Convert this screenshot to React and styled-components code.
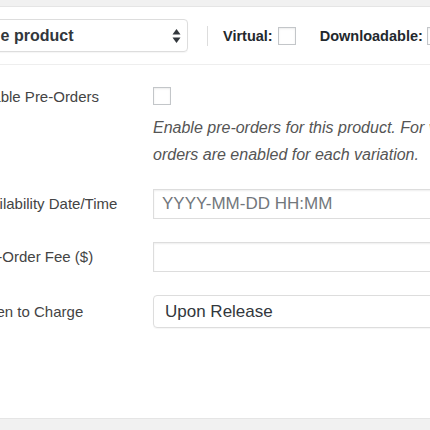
import React from 'react'
import styled, { createGlobalStyle } from 'styled-components'

const GlobalStyle = createGlobalStyle`
  body{
    margin: 0;
    background: #f1f1f1;
    font-family: "Liberation Sans", Arial, sans-serif;
    overflow: hidden;
  }
`;

const Page = styled.div`
  width: 430px;
  height: 430px;
  overflow: hidden;
  background: #f1f1f1;
  padding-top: 6px;
  box-sizing: border-box;
`;

const Panel = styled.div`
  background: #fff;
  border-top: 1px solid #e5e5e5;
  border-bottom: 1px solid #e5e5e5;
  height: 413px;
  box-sizing: border-box;
`;

const Header = styled.div`
  display: flex;
  align-items: center;
  height: 58px;
  margin-left: -52px;
  border-bottom: 1px solid #eee;
  box-sizing: border-box;
  white-space: nowrap;
  & > *{
    flex-shrink: 0;
  }
`;

const TypeSelect = styled.div`
  width: 240px;
  height: 33px;
  box-sizing: border-box;
  border: 1px solid #ddd;
  border-radius: 4px;
  display: flex;
  align-items: center;
  justify-content: space-between;
  padding: 0 6px 0 8px;
  font-size: 16px;
  font-weight: bold;
  color: #32373c;
  box-shadow: 0 1px 1px rgba(0,0,0,.04);
`;

const Divider = styled.span`
  width: 1px;
  height: 20px;
  background: #ddd;
  margin-left: 19px;
`;

const HeadLabel = styled.span`
  font-size: 14.5px;
  font-weight: bold;
  color: #23282d;
  margin-left: ${p => p.gap}px;
`;

const Check = styled.span`
  display: inline-block;
  width: 18px;
  height: 18px;
  box-sizing: border-box;
  border: 1px solid #c3c6c9;
  background: #fff;
  box-shadow: inset 0 1px 2px rgba(0,0,0,.08);
  margin-left: ${p => p.gap || 0}px;
  flex-shrink: 0;
`;

const Content = styled.div`
  margin-left: -26px;
  padding-top: 22px;
`;

const Row = styled.div`
  display: grid;
  grid-template-columns: 179px 400px;
  align-items: ${p => p.top ? 'start' : 'center'};
  margin-bottom: ${p => p.space}px;
`;

const Label = styled.div`
  font-size: 15px;
  line-height: 18px;
  color: #444;
  white-space: nowrap;
  padding-top: ${p => p.top ? 1 : 0}px;
`;

const Field = styled.div`
  display: flex;
  flex-direction: column;
`;

const Desc = styled.p`
  margin: 9px 0 0;
  font-size: 16px;
  line-height: 27px;
  font-style: italic;
  color: #555;
  white-space: nowrap;
`;

const TextInput = styled.div`
  height: 30px;
  box-sizing: border-box;
  border: 1px solid #ddd;
  box-shadow: inset 0 1px 2px rgba(0,0,0,.07);
  display: flex;
  align-items: center;
  padding-left: 8px;
  font-size: 17px;
  color: #72777c;
`;

const ChargeSelect = styled.div`
  height: 33px;
  box-sizing: border-box;
  border: 1px solid #ddd;
  border-radius: 4px;
  box-shadow: 0 1px 1px rgba(0,0,0,.04);
  display: flex;
  align-items: center;
  padding-left: 11px;
  font-size: 17px;
  color: #32373c;
`;

function Arrows() {
  return (
    <svg width="9" height="16" viewBox="0 0 9 16">
      <path d="M4.5 1 L8.5 6.5 H0.5 Z" fill="#32373c" />
      <path d="M4.5 15 L8.5 9.5 H0.5 Z" fill="#32373c" />
    </svg>
  )
}

export default function App() {
  return (
    <Page>
      <GlobalStyle />
      <Panel>
        <Header>
          <TypeSelect>
            <span>Simple product</span>
            <Arrows />
          </TypeSelect>
          <Divider />
          <HeadLabel gap={15}>Virtual:</HeadLabel>
          <Check gap={5} />
          <HeadLabel gap={24}>Downloadable:</HeadLabel>
          <Check gap={4} />
        </Header>
        <Content>
          <Row top space={21}>
            <Label top>Enable Pre-Orders</Label>
            <Field>
              <Check />
              <Desc>
                Enable pre-orders for this product. For variable products, pre-<br />
                orders are enabled for each variation.
              </Desc>
            </Field>
          </Row>
          <Row space={23}>
            <Label>Availability Date/Time</Label>
            <TextInput>YYYY-MM-DD HH:MM</TextInput>
          </Row>
          <Row space={23}>
            <Label>Pre-Order Fee ($)</Label>
            <TextInput />
          </Row>
          <Row space={0}>
            <Label>When to Charge</Label>
            <ChargeSelect>Upon Release</ChargeSelect>
          </Row>
        </Content>
      </Panel>
    </Page>
  )
}
